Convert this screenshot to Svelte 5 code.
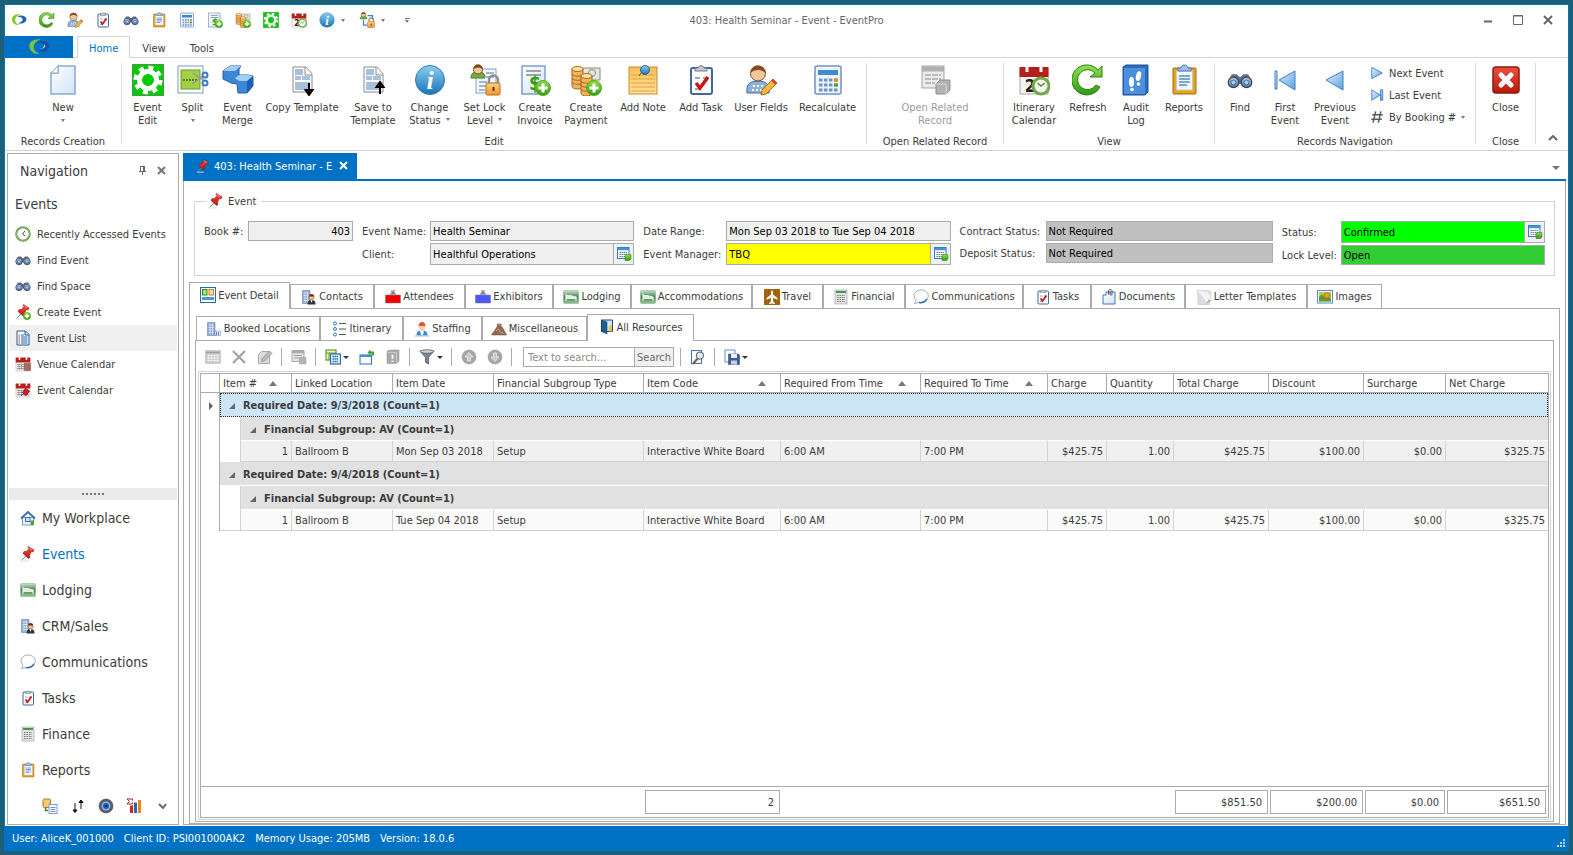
<script>
	const book = '<rect x="6" y="4" width="21" height="26" rx="2" fill="#fff" stroke="#4a6fa5" stroke-width="2"/>';
	const bino =
		'<path d="M3 14l3-5h6l3 3h2l3-3h6l3 5v7H3z" fill="#5b6f8c"/><circle cx="8" cy="19" r="6.5" fill="url(#steel)" stroke="#33455f" stroke-width="1.5"/><circle cx="24" cy="19" r="6.5" fill="url(#steel)" stroke="#33455f" stroke-width="1.5"/><circle cx="8" cy="19" r="3" fill="#a9c9f5" stroke="#2f5ea8"/><circle cx="24" cy="19" r="3" fill="#a9c9f5" stroke="#2f5ea8"/>';
	const plus =
		'<circle cx="24" cy="24" r="7.5" fill="url(#green)" stroke="#5aa81e"/><path d="M24 19.500v9M19.500 24h9" stroke="#fff" stroke-width="3"/>';
	const lock =
		'<path d="M20 20v-4a4.500 4.500 0 0 1 9 0v4" fill="none" stroke="#8f8f8f" stroke-width="2.500"/><rect x="17" y="19" width="14" height="12" rx="1.500" fill="url(#orange)" stroke="#b86d10"/><path d="M24.500 23v4" stroke="#5c3300" stroke-width="2"/>';
	const person =
		'<path d="M2 14c0-5 3-6 7-6s7 1 7 6z" fill="#6fae3f" stroke="#4a7c25"/><circle cx="9" cy="5.500" r="4.500" fill="#f1c89b" stroke="#7a4a20"/><path d="M4.500 5c0-6 9-6 9 0-3-2-6-2-9 0z" fill="#7a4a20"/>';
	const pin =
		'<path d="M3 29l9-9" stroke="#888" stroke-width="2"/><path d="M2 30h16" stroke="#ddd" stroke-width="2"/><path d="M17 1l11 7-2 4-3-1-4 7 1 5-3 2L6 15l2-4 5 0 5-6-2-2z" fill="url(#red)" stroke="#8f0b0b"/><path d="M19 4l5 4" stroke="#ff9d9d" stroke-width="2"/>';
	const calendar =
		'<rect x="2" y="5" width="28" height="25" fill="#f4f4f4" stroke="#a8a8a8"/><rect x="1.500" y="3" width="29" height="10" fill="#b5201c"/><path d="M9 1v7M23 1v7" stroke="#fff" stroke-width="3"/>';
	const calGrid = '<path d="M4 17h24M4 21h24M4 25h24M8 15v13M13 15v13M18 15v13M23 15v13" stroke="#8a8a8a" stroke-width="1.500"/>';
	const clock =
		'<circle cx="23" cy="22" r="8" fill="#f4faec" stroke="#6ea848" stroke-width="3"/><path d="M19.500 19l3.500 3 3.500-3" fill="none" stroke="#4d8a2a" stroke-width="1.500"/>';
	const clipTop = '<path d="M10 7V4h3c0-3 6-3 6 0h3v3z" fill="#c3cad3" stroke="#6f7885"/>';
	const building =
		'<path d="M3 3h15v26H3z" fill="#8ba6d1" stroke="#5a76a5"/><path d="M5 8h11M5 13h11M5 18h11M5 23h11M8 5v23M13 5v23" stroke="#dfe8f7" stroke-width="1.500"/>';
	const bed =
		'<rect x="1" y="3" width="30" height="26" rx="2" fill="url(#bed)" stroke="#7da783"/><path d="M6 9v15M26 15v9" stroke="#fff" stroke-width="2"/><path d="M7 19h19v-3l-11-3H7z" fill="#dfeedd" stroke="#fff" stroke-width="1.500"/>';
	const template =
		'<path d="M7 3h13l6 7v18H7z" fill="#fff" stroke="#8a8a8a"/><path d="M19 3v8h7" fill="#fff" stroke="#8a8a8a"/><path d="M9 5h8v6H9zM9 12h6v4H9zM16 12h8v4h-8zM9 18h15v8H9z" fill="#a9bfe0"/>';
	const gridBox =
		'<rect x="3" y="3" width="23" height="22" fill="#fff" stroke="#2f7cc4" stroke-width="2"/><path d="M3 6h23" stroke="#3f96e0" stroke-width="5"/><path d="M7 13h16M7 17h16M7 21h12" stroke="#6d7d8e" stroke-width="2" stroke-dasharray="3 1"/><path d="M18 19l3-2h9v9l-3 3h-9z" fill="url(#green)" stroke="#267a12"/>';
	const page = '<path d="M11 2h17v28H4V9h7z" fill="url(#sheet)" stroke="#87a9d2" stroke-width="1.500"/><path d="M4 9l7-7v7z" fill="#fff" stroke="#87a9d2"/>';
	const badge = (c) =>
		`<path d="M1 12h30v16H1z" fill="${c}" stroke="#777" stroke-width="1"/><path d="M11 12h10V8h-2V3h-6v5h-2z" fill="#b2b2b2" stroke="#888"/><circle cx="16" cy="8" r="2" fill="#666"/>`;
	const coins =
		'<path d="M2 5v17c0 4 11 4 11 0V5z" fill="#f0b55a" stroke="#a8641b"/><ellipse cx="7.500" cy="5" rx="5.500" ry="2.500" fill="#ffe0a0" stroke="#a8641b"/><path d="M2 10c0 3 11 3 11 0M2 14c0 3 11 3 11 0M2 18c0 3 11 3 11 0" fill="none" stroke="#a8641b"/>';
	const gear = '<circle cx="16" cy="16" r="8.500" fill="none" stroke="#fff" stroke-width="5"/><circle cx="16" cy="16" r="12.500" fill="none" stroke="#fff" stroke-width="4" stroke-dasharray="5 4.820"/>';
	const disabledCalc =
		'<rect x="1" y="3" width="30" height="26" fill="#c9c9c9" stroke="#b5b5b5"/><path d="M2 7h28" stroke="#a0a0a0" stroke-width="3"/><path d="M5 13h22M5 18h22M5 23h22" stroke="#fff" stroke-width="3" stroke-dasharray="4 2"/>';
	const swirl = (left, right) =>
		`<path d="M19 5C8 3 1 9 2 16c1 7 8 11 15 10C10 23 7 19 9 13c1-4 5-7 10-8z" fill="${left}"/><path d="M12 10c6-5 18-3 19 4 0 7-9 11-17 8 6-1 10-4 9-8-1-3-6-5-11-4z" fill="${right}"/>`;

	const icons = {
		logo: swirl('#86c52c', '#1c62b4'),
		appLogo: swirl('#7cc043', '#1b50a0') + '<path d="M15 19c5 0 9-2 8-7 4 2 3 7-8 7z" fill="#9fc6ee"/>',
		refresh: '<path d="M24 21a10 10 0 1 1-1-12l-5 4h12V2l-4 4A15 15 0 1 0 28 23z" fill="url(#green)" stroke="#2a7f10"/>',
		user: '<path d="M2 29c-1-9 3-12 11-12s12 3 11 12z" fill="#8fb0da" stroke="#446a9c"/><path d="M8 22h11M7 26h13" stroke="#fff" stroke-width="2" stroke-dasharray="2 2"/><circle cx="13" cy="9.500" r="7.500" fill="#f4c79b" stroke="#7a4a20"/><path d="M5.500 9c0-10 15-10 15 0-4-4-11-4-15 0z" fill="#8a4b1e"/><path d="M16 31l1-5 11-11 4 4-11 11z" fill="#f5b942" stroke="#a8661a"/><path d="M27 16l4 4" stroke="#d33" stroke-width="2"/>',
		task: book.replace('#4a6fa5', '#3f67a0') + clipTop + '<path d="M10 14h5M18 14h5M10 25h5" stroke="#9aa9bb" stroke-width="2"/><path d="M11 19l4 5 8-11" fill="none" stroke="#c4161c" stroke-width="3.500"/>',
		find: bino,
		report: '<rect x="5" y="4" width="23" height="26" rx="1" fill="#e6a31c" stroke="#a06a10"/><rect x="8.500" y="7" width="16" height="19" fill="#f4f9ff" stroke="#c2cad6"/><path d="M11 12h11M11 15h11M11 18h11M11 21h8" stroke="#5a88c4" stroke-width="1.500"/><path d="M10 7V4h3c0-4 7-4 7 0h3v3z" fill="#9cc0e8" stroke="#4a78ae"/>',
		calc: '<rect x="3" y="2" width="26" height="28" rx="2" fill="#eef4fd" stroke="#6f91c4" stroke-width="1.500"/><path d="M6 8.500h20" stroke="#3f8ad0" stroke-width="5"/><path d="M7 16h19M7 21h19M7 26h19" stroke="#6f91c4" stroke-width="3" stroke-dasharray="3.500 1.500"/><path d="M22 16h4" stroke="#e8861c" stroke-width="3"/><path d="M22 21h4" stroke="#48a820" stroke-width="3"/>',
		invoice: '<rect x="3" y="2" width="23" height="28" fill="url(#sheet)" stroke="#7aa0cc" stroke-width="1.500"/><path d="M7 7h15M7 11h15" stroke="#888" stroke-width="1.500"/><text x="16" y="26" font-size="19" font-weight="bold" fill="#2f9c12" text-anchor="middle">$</text>' + plus,
		payment: '<rect x="12" y="4" width="18" height="12" fill="#e6e6e0" stroke="#8b8b80"/><circle cx="22" cy="9" r="3.500" fill="none" stroke="#8b8b80"/>' + coins + `<g transform="translate(9 7)">${coins}</g>` + plus,
		gear: '<rect x=".5" y=".5" width="31" height="31" fill="#0c0" stroke="#5c8a5c"/>' + gear,
		itinerary: calendar + '<text x="12" y="28" font-size="17" font-weight="bold" fill="#222" text-anchor="middle">2</text>' + clock,
		info: '<circle cx="16" cy="16" r="14.500" fill="url(#blue)" stroke="#2c7cb8"/><text x="16" y="25" font-family="Liberation Serif" font-size="26" font-style="italic" font-weight="bold" fill="#fff" text-anchor="middle">i</text>',
		lockTree: person + '<path d="M17 7h10v8M9 16v10h7" fill="none" stroke="#3f82c8" stroke-width="2.500"/>' + lock,
		lockUser: '<rect x="7" y="5" width="20" height="24" fill="#f4f8fd" stroke="#7fa0cc"/><path d="M17 9h8M17 13h8M10 18h8M10 22h8M10 26h6" stroke="#7fa0cc" stroke-width="1.500"/>' + person + lock,
		page,
		split: '<rect x="1" y="2" width="25" height="27" fill="#fff" stroke="#7a9cc8"/><rect x="4" y="6" width="19" height="19" fill="#a5cf45" stroke="#6c9c1c"/><path d="M6 16h15" stroke="#41610c" stroke-width="1.500" stroke-dasharray="2 1"/><path d="M16 9l10 7M15 20l11-8" stroke="#8f99a6" stroke-width="1.500"/><circle cx="28" cy="11" r="2.500" fill="#fff" stroke="#3b78c4" stroke-width="2"/><circle cx="28" cy="19" r="2.500" fill="#fff" stroke="#3b78c4" stroke-width="2"/>',
		merge: '<path d="M1 7l7-5h11l-2 3v6h9l5 1v10l-6 7h-9l-1-9-6-1-8-4z" fill="#3c87d8" stroke="#1f5fa8"/><path d="M1 7l7-5h11l-6 5zM17 11h9l5 1-5 5h-9l-4-3z" fill="#9fcdf6"/><path d="M25 17l6-5v10l-6 7z" fill="#1e62b4"/>',
		copyTemplate: template + '<path d="M23 19v10M19.500 26l3.500 5 3.500-5z" stroke="#000" stroke-width="2"/>',
		saveTemplate: template + '<path d="M23 30V20M19.500 23l3.500-5 3.500 5z" stroke="#000" stroke-width="2"/>',
		note: '<rect x="2" y="3" width="28" height="27" fill="url(#note)" stroke="#c98b2b"/><path d="M4 11h24M4 15h24M4 19h24M4 23h24M4 27h24" stroke="#e2a13c"/><circle cx="18" cy="6" r="4.500" fill="url(#blue)" stroke="#2a5f96"/><path d="M14 9l-2 3" stroke="#555"/>',
		related: '<rect x="3" y="2" width="22" height="22" fill="#ececec" stroke="#a3a3a3"/><path d="M3 5h22" stroke="#b0b0b0" stroke-width="5"/><path d="M6 11h16M6 15h16M6 19h10" stroke="#a9a9a9" stroke-width="1.500" stroke-dasharray="6 1"/><path d="M17 20l4-4h10v10l-4 4H17z" fill="#b2b2b2" stroke="#8f8f8f"/><path d="M17 20h10v10" fill="none" stroke="#d9d9d9"/>',
		audit: '<path d="M3 3l3-2h22v27l-3 3H3z" fill="#2c6cc0" stroke="#1d4f96"/><rect x="4" y="4" width="21" height="26" fill="#4c8fdc"/><ellipse cx="11.500" cy="18" rx="2.500" ry="5" fill="#fff"/><ellipse cx="18.500" cy="12" rx="2.500" ry="5" fill="#fff" transform="rotate(12 18 12)"/><circle cx="12" cy="25.500" r="1.800" fill="#fff"/><circle cx="18.500" cy="20" r="1.800" fill="#fff"/>',
		first: '<path d="M6 7h2v18H6zM26 7v19L10 16z" fill="url(#sky)" stroke="#3f7cc0"/>',
		prev: '<path d="M24 7v19L7 16z" fill="url(#sky)" stroke="#3f7cc0"/>',
		next: '<path d="M4 3v26l24-13z" fill="url(#sky)" stroke="#3f7cc0" stroke-width="2"/>',
		last: '<path d="M24 4h5v24h-5zM4 4v24l19-12z" fill="url(#sky)" stroke="#3f7cc0" stroke-width="2"/>',
		hash: '<path d="M13 3L7 29M25 3l-6 26M5 11h24M3 21h24" stroke="#55605a" stroke-width="3.500"/>',
		closeRed: '<rect x="3" y="3" width="26" height="26" rx="3" fill="url(#red)" stroke="#8a1a0c" stroke-width="1.500"/><path d="M11 11l10 10M21 11L11 21" stroke="#fff" stroke-width="5" stroke-linecap="round"/>',
		pin,
		pinPlus: pin + plus,
		recent: '<circle cx="16" cy="16" r="13.500" fill="#fff" stroke="#5d9641" stroke-width="4"/><circle cx="16" cy="16" r="13.500" fill="none" stroke="#b6d69c" stroke-width="1"/><path d="M20 10l-5 6 5 4" fill="none" stroke="#444" stroke-width="2"/>',
		list: '<path d="M4 2h17l7 7v21H4z" fill="#fff" stroke="#1c5a96" stroke-width="2"/><path d="M20 2v8h8" fill="#cfe0f2" stroke="#1c5a96" stroke-width="2"/><path d="M12 10h6M12 14h13M12 18h13M12 22h13M12 26h13" stroke="#1f66ac" stroke-width="2"/><path d="M7 10h3M7 14h3M7 18h3M7 22h3M7 26h3" stroke="#c33" stroke-width="2"/>',
		venueCal: calendar + calGrid + '<rect x="19" y="15" width="12" height="14" fill="#a86a5a" stroke="#7c463a"/>',
		eventCal: calendar + calGrid + '<path d="M12 28l7-7M21 13l8 5-7 9-7-6z" fill="#d8202a" stroke="#99101a" stroke-width="2"/>',
		home: '<path d="M5 15h22v15H5z" fill="#eaf2fc" stroke="#4d7cb8" stroke-width="1.500"/><path d="M2 17L16 4l14 13" fill="none" stroke="#3e6fae" stroke-width="4"/><rect x="11" y="15" width="9" height="8" fill="#cfe0f6" stroke="#3e6fae" stroke-width="2"/><rect x="21" y="21" width="7" height="9" fill="#4da52c"/>',
		lodging: bed,
		crm: building + '<path d="M13 31c0-7 3-9 8-9s8 2 8 9z" fill="#333"/><path d="M19 22l2 6 2-6z" fill="#fff"/><circle cx="21" cy="16" r="5.500" fill="#f1c08c" stroke="#7a4a20"/><path d="M16 15c0-6 10-6 10 0z" fill="#5a3416"/>',
		chat: '<path d="M6 23C-3 12 5 2 16 2s20 10 11 20c-4 5-11 6-15 5l-9 2z" fill="#fff" stroke="#8593a3" stroke-width="1.500"/><path d="M28 20c-4 6-10 8-16 7" fill="none" stroke="#3c6fb0" stroke-width="3"/>',
		finance: '<rect x="4" y="2" width="24" height="28" fill="#e4e4e4" stroke="#8b8b8b"/><path d="M6 6h20" stroke="#3f9a4d" stroke-width="4"/><path d="M8 13h16M8 17h16M8 21h16M8 25h16" stroke="#777" stroke-width="2" stroke-dasharray="3 2"/>',
		database: '<rect x="2" y="2" width="15" height="17" rx="3" fill="#f2c877" stroke="#a87424" stroke-width="2"/><rect x="14" y="13" width="16" height="18" fill="#fff" stroke="#7b9fd0" stroke-width="2"/><path d="M17 19h10M17 23h10M17 27h10" stroke="#6b94cc" stroke-width="2"/><path d="M7 20v5h5" fill="none" stroke="#2f9020" stroke-width="3"/>',
		arrows: '<path d="M10 10v18M6 24l4 5 4-5zM22 22V4M18 9l4-5 4 5z" fill="#111" stroke="#111" stroke-width="2"/>',
		lens: '<circle cx="16" cy="16" r="14" fill="#565c66" stroke="#33373d"/><circle cx="16" cy="16" r="9" fill="#8db7ee"/><circle cx="16" cy="16" r="6" fill="#2058ac"/><circle cx="16" cy="16" r="2" fill="#0b1f4a"/>',
		sigma: '<path d="M2 2h11v3M2 2l5 5-5 5h11V9" fill="none" stroke="#b02020" stroke-width="2"/><path d="M8 15h6v15H8z" fill="#cc2a1e"/><path d="M16 9h6v21h-6z" fill="#2f66b4"/><path d="M24 4h6v26h-6z" fill="#f08218"/>',
		detail: '<rect x="1" y="1" width="30" height="30" fill="#f5faff" stroke="#2b6ca8" stroke-width="2"/><rect x="5" y="5" width="9" height="11" fill="#a8dc6c" stroke="#3f8a14" stroke-width="2"/><rect x="18" y="5" width="9" height="11" fill="#f5dca0" stroke="#c58a2a" stroke-width="2"/><path d="M4 23h24" stroke="#4b98cf" stroke-width="6"/>',
		badgeRed: badge('#f40000'),
		badgeBlue: badge('#4b57ff'),
		travel: '<rect width="32" height="32" rx="1" fill="#a8690f"/><path d="M4 0v32M9 0v32M23 0v32M28 0v32" stroke="#7c4a08"/><path d="M16 3c2 0 2 4 2 8l9 7v3l-9-3v7l4 3v2l-6-1-6 1v-2l4-3v-7l-9 3v-3l9-7c0-4 0-8 2-8z" fill="#fff"/>',
		document: '<path d="M10 6h18v24H4V12h6z" fill="url(#sheet)" stroke="#4077b8" stroke-width="2"/><path d="M15 11V4c0-4 7-4 7 0v6c0 3-4 3-4 0V5" fill="none" stroke="#444" stroke-width="1.800"/>',
		letter: '<path d="M3 2l26 2-2 27H4z" fill="#dedee2" stroke="#b6b6bc"/><path d="M3 2l19 3 7 8-5 17" fill="#f4f4f6" stroke="#d2d2d6"/><path d="M19 31l7-10 4 2z" fill="#aaa"/>',
		image: '<rect x="1" y="3" width="30" height="25" fill="#fff" stroke="#5b86c4" stroke-width="2"/><rect x="4" y="6" width="24" height="19" fill="#b8c84c"/><path d="M4 25V15l6-4 6 6 5-3 7 5v6z" fill="#5f9c2a"/><circle cx="20" cy="13" r="5.500" fill="#f0a020" stroke="#a3571a" stroke-width="2" stroke-dasharray="2 1"/>',
		building: building + '<path d="M18 20h11v9H18z" fill="#f7fafd" stroke="#5a76a5"/><path d="M21 22v6M25 22v6" stroke="#4a78be" stroke-width="2"/>',
		steps: '<g fill="#fff" stroke="#2f76b8" stroke-width="2"><circle cx="6" cy="5" r="3"/><circle cx="6" cy="16" r="3"/><circle cx="6" cy="27" r="3"/></g><path d="M14 5h14M14 16h14M14 27h14" stroke="#555" stroke-width="2"/>',
		staff: '<path d="M5 30c0-9 4-11 11-11s11 2 11 11z" fill="#3a87d6"/><path d="M12 19h8l-2 9h-4z" fill="#fff"/><circle cx="16" cy="12" r="6.500" fill="#f6cfa3"/><path d="M9 10c0-11 14-11 14 0z" fill="#e8541f"/><path d="M1 30h30" stroke="#c8d5e2" stroke-width="3"/>',
		misc: '<path d="M1 28l9-13 5-8 8 6 8 15z" fill="#8f6a50" stroke="#5f4330"/><path d="M12 6h9l-2 5h-5z" fill="#b98f70" stroke="#5f4330"/><path d="M10 20l5-4 4 7 6 1" stroke="#c9a78c" stroke-width="2" fill="none"/>',
		door: '<path d="M5 2h22v23H5z" fill="#cde6f9" stroke="#16456e" stroke-width="2"/><path d="M5 2l11 4v24L5 25z" fill="#1c5f98" stroke="#0f3556"/><path d="M20 25V13h6v12z" fill="#f0c040"/>',
		addRow: disabledCalc,
		remove: '<path d="M4 4l24 24M28 4L4 28" stroke="#a3a3a3" stroke-width="4.500"/>',
		edit: '<path d="M9 5h16v24H3V11z" fill="#dcdcdc" stroke="#a8a8a8" stroke-width="2"/><path d="M9 25l1-6L25 4l5 5-15 15z" fill="#bcbcbc" stroke="#8f8f8f" stroke-width="1.500"/>',
		gridOff: '<path d="M2 3h24v22H2z" fill="#e6e6e6" stroke="#a6a6a6" stroke-width="2"/><path d="M2 6h24" stroke="#aaa" stroke-width="5"/><path d="M6 13h16M6 18h16" stroke="#9f9f9f" stroke-width="2"/><path d="M17 17h13v13H17z" fill="#b4b4b4" stroke="#999"/>',
		grids: '<rect x="2" y="2" width="20" height="20" fill="#e4f2c4" stroke="#6b9c28" stroke-width="2.500"/><path d="M2 8h20M8 8v14" stroke="#6b9c28" stroke-width="2"/><rect x="11" y="10" width="20" height="20" fill="#e9f2fd" stroke="#2e6bb0" stroke-width="2.500"/><path d="M15 15h12M15 20h12M15 25h12" stroke="#2e6bb0" stroke-width="3" stroke-dasharray="3 1"/>',
		reset: '<rect x="2" y="12" width="23" height="18" fill="#fff" stroke="#2f6fb4" stroke-width="2"/><path d="M2 14h23" stroke="#3f8fdc" stroke-width="4"/><path d="M17 7l6-6v4h7v8h-4V9h-3v4z" fill="#3fa026"/>',
		bookOff: '<path d="M4 5l4-3h20v22l-5 5H4z" fill="#a9a9a9" stroke="#8c8c8c"/><path d="M5 7h18v21" fill="none" stroke="#ccc" stroke-width="2"/><path d="M15 11v9M15 23v3" stroke="#eee" stroke-width="4"/>',
		funnel: '<path d="M2 4h28L19 17v13l-6-3V17z" fill="#7f8894" stroke="#4b525c" stroke-width="1.500"/><ellipse cx="16" cy="5" rx="13.500" ry="3.500" fill="#cdd4dd" stroke="#4b525c" stroke-width="1.500"/>',
		up: '<circle cx="16" cy="16" r="14" fill="#a6a6a6" stroke="#8f8f8f"/><path d="M16 7l8 9h-5v8h-6v-8H8z" fill="#c8c8c8" stroke="#eee" stroke-width="1.500"/>',
		down: '<circle cx="16" cy="16" r="14" fill="#a6a6a6" stroke="#8f8f8f"/><path d="M16 25l8-9h-5V8h-6v8H8z" fill="#c8c8c8" stroke="#eee" stroke-width="1.500"/>',
		preview: '<rect x="3" y="3" width="20" height="26" fill="#f6faff" stroke="#3f77b8" stroke-width="2"/><path d="M6 30l10-12" stroke="#8a5a28" stroke-width="4"/><circle cx="20" cy="13" r="7" fill="#e4effa" stroke="#6b7480" stroke-width="2.500"/>',
		save: '<path d="M2 2h20v24H2z" fill="#fff" stroke="#5f8dc8" stroke-width="2"/><path d="M9 10h20l2 2v19H9z" fill="#3b5d94" stroke="#263f68"/><path d="M14 10h12v8H14z" fill="#e9eef6"/><path d="M14 23h12v8H14z" fill="#c6d0e0"/>',
		lookup: gridBox
	};

	const quick = ['logo', 'refresh', 'user', 'task', 'find', 'report', 'calc', 'invoice', 'payment', 'gear', 'itinerary', 'info', 'lockTree'];

	const ribbon = [
		{ caption: 'Records Creation', buttons: [{ icon: 'page', lines: ['New'], w: 60, menu: true }], w: 117 },
		{
			caption: 'Edit',
			w: 745,
			buttons: [
				{ icon: 'gear', lines: ['Event', 'Edit'], w: 45 },
				{ icon: 'split', lines: ['Split'], w: 45, menu: true },
				{ icon: 'merge', lines: ['Event', 'Merge'], w: 45 },
				{ icon: 'copyTemplate', lines: ['Copy Template'], w: 84 },
				{ icon: 'saveTemplate', lines: ['Save to', 'Template'], w: 58 },
				{ icon: 'info', lines: ['Change', 'Status'], w: 55, menu: true },
				{ icon: 'lockUser', lines: ['Set Lock', 'Level'], w: 55, menu: true },
				{ icon: 'invoice', lines: ['Create', 'Invoice'], w: 46 },
				{ icon: 'payment', lines: ['Create', 'Payment'], w: 56 },
				{ icon: 'note', lines: ['Add Note'], w: 58 },
				{ icon: 'task', lines: ['Add Task'], w: 58 },
				{ icon: 'user', lines: ['User Fields'], w: 62 },
				{ icon: 'calc', lines: ['Recalculate'], w: 71 }
			]
		},
		{ caption: 'Open Related Record', w: 137, buttons: [{ icon: 'related', lines: ['Open Related', 'Record'], w: 90, disabled: true }] },
		{
			caption: 'View',
			w: 211,
			buttons: [
				{ icon: 'itinerary', lines: ['Itinerary', 'Calendar'], w: 54 },
				{ icon: 'refresh', lines: ['Refresh'], w: 54 },
				{ icon: 'audit', lines: ['Audit', 'Log'], w: 42 },
				{ icon: 'report', lines: ['Reports'], w: 54 }
			]
		},
		{
			caption: 'Records Navigation',
			w: 261,
			buttons: [
				{ icon: 'find', lines: ['Find'], w: 44, small: true },
				{ icon: 'first', lines: ['First', 'Event'], w: 46 },
				{ icon: 'prev', lines: ['Previous', 'Event'], w: 54 }
			],
			list: [
				{ icon: 'next', text: 'Next Event' },
				{ icon: 'last', text: 'Last Event' },
				{ icon: 'hash', text: 'By Booking #', menu: true }
			]
		},
		{ caption: 'Close', w: 60, buttons: [{ icon: 'closeRed', lines: ['Close'], w: 50 }] }
	];

	const links = [
		['recent', 'Recently Accessed Events'],
		['find', 'Find Event'],
		['find', 'Find Space'],
		['pinPlus', 'Create Event'],
		['list', 'Event List'],
		['venueCal', 'Venue Calendar'],
		['eventCal', 'Event Calendar']
	];

	const modules = [
		['home', 'My Workplace'],
		['pin', 'Events'],
		['lodging', 'Lodging'],
		['crm', 'CRM/Sales'],
		['chat', 'Communications'],
		['task', 'Tasks'],
		['finance', 'Finance'],
		['report', 'Reports']
	];

	const tabs = [
		{ icon: 'detail', text: 'Event Detail', w: 101 },
		{ icon: 'crm', text: 'Contacts', w: 84 },
		{ icon: 'badgeRed', text: 'Attendees', w: 91 },
		{ icon: 'badgeBlue', text: 'Exhibitors', w: 88 },
		{ icon: 'lodging', text: 'Lodging', w: 78 },
		{ icon: 'lodging', text: 'Accommodations', w: 121 },
		{ icon: 'travel', text: 'Travel', w: 71 },
		{ icon: 'finance', text: 'Financial', w: 82 },
		{ icon: 'chat', text: 'Communications', w: 118 },
		{ icon: 'task', text: 'Tasks', w: 68 },
		{ icon: 'document', text: 'Documents', w: 94 },
		{ icon: 'letter', text: 'Letter Templates', w: 122 },
		{ icon: 'image', text: 'Images', w: 75 }
	];

	const subTabs = [
		{ icon: 'building', text: 'Booked Locations', w: 124 },
		{ icon: 'steps', text: 'Itinerary', w: 83 },
		{ icon: 'staff', text: 'Staffing', w: 79 },
		{ icon: 'misc', text: 'Miscellaneous', w: 105 },
		{ icon: 'door', text: 'All Resources', w: 107 }
	];

	const columns = [
		{ text: 'Item #', w: 71, sort: true, right: true },
		{ text: 'Linked Location', w: 101 },
		{ text: 'Item Date', w: 101 },
		{ text: 'Financial Subgroup Type', w: 150 },
		{ text: 'Item Code', w: 137, sort: true, total: '2' },
		{ text: 'Required From Time', w: 140, sort: true },
		{ text: 'Required To Time', w: 127, sort: true },
		{ text: 'Charge', w: 59, right: true },
		{ text: 'Quantity', w: 67, right: true },
		{ text: 'Total Charge', w: 95, right: true, total: '$851.50' },
		{ text: 'Discount', w: 95, right: true, total: '$200.00' },
		{ text: 'Surcharge', w: 82, right: true, total: '$0.00' },
		{ text: 'Net Charge', right: true, total: '$651.50' }
	];

	const groups = [
		{ date: '9/3/2018', day: 'Mon Sep 03 2018' },
		{ date: '9/4/2018', day: 'Tue Sep 04 2018' }
	].map((g) => ({
		...g,
		cells: ['1', 'Ballroom B', g.day, 'Setup', 'Interactive White Board', '6:00 AM', '7:00 PM', '$425.75', '1.00', '$425.75', '$100.00', '$0.00', '$325.75']
	}));

	const totalsTemplate = columns.map((c) => (c.w ? c.w + 'px' : '1fr')).join(' ');

	let tab = $state('Event Detail');
	let subTab = $state('All Resources');
	let link = $state('Event List');
	let module = $state('Events');
	let search = $state('');
</script>

{#snippet icon(name, size = 16)}
	<svg class="icon" width={size} height={size} viewBox="0 0 32 32" fill="none" aria-hidden="true">{@html icons[name]}</svg>
{/snippet}

{#snippet tool(name, menu = false)}
	<button class="tool" aria-label={name}>
		{@render icon(name)}
		{#if menu}<span class="caret dark"></span>{/if}
	</button>
{/snippet}

{#snippet field(id, label, value, kind = '', lookup = false)}
	<label for={id}>{label}</label>
	<div class="field {kind}" class:lookup>
		<input {id} type="text" {value} readonly />
		{#if lookup}<button aria-label="Look up {label}">{@render icon('lookup')}</button>{/if}
	</div>
{/snippet}

{#snippet tabRow(items, current, pick)}
	<div class="tabs" role="tablist">
		{#each items as t}
			<button role="tab" aria-selected={t.text === current} class:active={t.text === current} style="width: {t.w}px" onclick={() => pick(t.text)}>
				{@render icon(t.icon)}{t.text}
			</button>
		{/each}
	</div>
{/snippet}

<svg class="defs" width="0" height="0" aria-hidden="true">
	<defs>
		<linearGradient id="green" x2="0" y2="1"><stop stop-color="#8fe04a" /><stop offset="1" stop-color="#2f9a14" /></linearGradient>
		<linearGradient id="blue" x2="0" y2="1"><stop stop-color="#8ccdf0" /><stop offset="1" stop-color="#1a74b8" /></linearGradient>
		<linearGradient id="sky" x2="1" y2="1"><stop stop-color="#e6f4ff" /><stop offset="1" stop-color="#5aa0e4" /></linearGradient>
		<linearGradient id="sheet" x2="1" y2="1"><stop stop-color="#fff" /><stop offset="1" stop-color="#cfe3f8" /></linearGradient>
		<linearGradient id="red" x2="0" y2="1"><stop stop-color="#ee5040" /><stop offset="1" stop-color="#b8180c" /></linearGradient>
		<linearGradient id="orange" x2="0" y2="1"><stop stop-color="#ffd28a" /><stop offset="1" stop-color="#f0942a" /></linearGradient>
		<linearGradient id="note" x2="0" y2="1"><stop stop-color="#f7bf55" /><stop offset="1" stop-color="#ffe3a0" /></linearGradient>
		<linearGradient id="steel" x2="0" y2="1"><stop stop-color="#c3d0e2" /><stop offset="1" stop-color="#4f6890" /></linearGradient>
		<linearGradient id="bed" x2="0" y2="1"><stop stop-color="#cfe2cf" /><stop offset=".5" stop-color="#3b8148" /><stop offset="1" stop-color="#9cc69c" /></linearGradient>
	</defs>
</svg>

<div class="desktop">
	<div class="window">
		<header>
			<div class="quick">
				{#each quick as name}
					<button aria-label={name}>{@render icon(name)}</button>
					{#if name === 'info' || name === 'lockTree'}<span class="caret"></span>{/if}
				{/each}
				<button class="customize" aria-label="Customize toolbar"><i></i><span class="caret"></span></button>
			</div>
			<h1>403: Health Seminar - Event - EventPro</h1>
			<div class="controls">
				<button aria-label="Minimize"><svg width="12" height="12"><path d="M2 7.500h8" stroke="#666" stroke-width="2" /></svg></button>
				<button aria-label="Maximize"><svg width="12" height="12"><path d="M1.500 1.500h9v9h-9z M1 2h10" fill="none" stroke="#666" /></svg></button>
				<button aria-label="Close window"><svg width="12" height="12"><path d="M2 2l8 8M10 2l-8 8" stroke="#666" stroke-width="2" /></svg></button>
			</div>
		</header>

		<nav class="menu">
			<button class="app" aria-label="Application menu">{@render icon('appLogo', 22)}</button>
			<a href="#home" class="active">Home</a>
			<a href="#view">View</a>
			<a href="#tools">Tools</a>
		</nav>

		<div class="ribbon">
			{#each ribbon as group}
				<section style="width: {group.w}px">
					<div class="buttons">
						{#each group.buttons as b}
							<button class="big" style="width: {b.w}px" disabled={b.disabled}>
								<span class="pic">{@render icon(b.icon, b.small ? 26 : 32)}</span>
								{#each b.lines as line, i}
									<span>{line}{#if b.menu && i === 1}<span class="caret inline"></span>{/if}</span>
								{/each}
								{#if b.menu && b.lines.length === 1}<span class="caret below"></span>{/if}
							</button>
						{/each}
						{#if group.list}
							<div class="list">
								{#each group.list as l}
									<button>{@render icon(l.icon, 14)}{l.text}{#if l.menu}<span class="caret"></span>{/if}</button>
								{/each}
							</div>
						{/if}
					</div>
					<h2>{group.caption}</h2>
				</section>
			{/each}
			<button class="collapse" aria-label="Collapse ribbon">
				<svg width="10" height="6"><path d="M1 5l4-4 4 4" fill="none" stroke="#666" stroke-width="2" /></svg>
			</button>
		</div>

		<div class="body">
			<aside>
				<div class="title">
					<h2>Navigation</h2>
					<button aria-label="Pin panel"><svg width="7" height="9"><path d="M1.500 0v5M2 .5h3M4.500 0v5M5.500 0v5M0 5.500h7M3.500 6v3" fill="none" stroke="#666" /></svg></button>
					<button aria-label="Close panel"><svg width="9" height="9"><path d="M1 1l7 7M8 1L1 8" stroke="#777" stroke-width="2" /></svg></button>
				</div>
				<h3>Events</h3>
				<ul class="links">
					{#each links as [name, text]}
						<li><a href="#{text}" class:active={text === link} onclick={() => (link = text)}>{@render icon(name)}{text}</a></li>
					{/each}
				</ul>
				<div class="splitter">{#each Array(6) as _}<i></i>{/each}</div>
				<ul class="modules">
					{#each modules as [name, text]}
						<li><a href="#{text}" class:active={text === module} onclick={() => (module = text)}>{@render icon(name)}{text}</a></li>
					{/each}
				</ul>
				<div class="extra">
					{#each ['database', 'arrows', 'lens', 'sigma'] as name}
						<button aria-label={name}>{@render icon(name)}</button>
					{/each}
					<button aria-label="More"><svg width="9" height="7"><path d="M1 1l4 4 3-4" fill="none" stroke="#666" stroke-width="2" /></svg></button>
				</div>
			</aside>

			<main>
				<div class="docs">
					<div class="doc">
						{@render icon('pin', 14)}<span>403: Health Seminar - E</span>
						<button aria-label="Close tab"><svg width="9" height="9"><path d="M1 1l7 7M8 1L1 8" stroke="#fff" stroke-width="2" /></svg></button>
					</div>
					<button class="more" aria-label="Open documents"><span class="caret large"></span></button>
				</div>

				<div class="content">
					<fieldset>
						<legend>{@render icon('pin')}Event</legend>
						<div class="fields">
							<div class="pair a">{@render field('book', 'Book #:', '403', 'number')}</div>
							<div class="pair b">
								{@render field('name', 'Event Name:', 'Health Seminar')}
								{@render field('client', 'Client:', 'Healthful Operations', '', true)}
							</div>
							<div class="pair c">
								{@render field('range', 'Date Range:', 'Mon Sep 03 2018 to Tue Sep 04 2018')}
								{@render field('manager', 'Event Manager:', 'TBQ', 'yellow', true)}
							</div>
							<div class="pair d">
								{@render field('contract', 'Contract Status:', 'Not Required', 'gray')}
								{@render field('deposit', 'Deposit Status:', 'Not Required', 'gray')}
							</div>
							<div class="pair e">
								{@render field('status', 'Status:', 'Confirmed', 'lime', true)}
								{@render field('lock', 'Lock Level:', 'Open', 'green')}
							</div>
						</div>
					</fieldset>

					{@render tabRow(tabs, tab, (t) => (tab = t))}
					<div class="page">
						{@render tabRow(subTabs, subTab, (t) => (subTab = t))}
						<div class="page inner">
							<div class="toolbar">
								{@render tool('addRow')}
								{@render tool('remove')}
								{@render tool('edit')}
								<hr />
								{@render tool('gridOff')}
								<hr />
								{@render tool('grids', true)}
								{@render tool('reset')}
								{@render tool('bookOff')}
								<hr />
								{@render tool('funnel', true)}
								<hr />
								{@render tool('up')}
								{@render tool('down')}
								<hr />
								<form class="search" onsubmit={(ev) => ev.preventDefault()}>
									<input type="text" placeholder="Text to search..." aria-label="Text to search" bind:value={search} />
									<button type="submit">Search</button>
								</form>
								<hr />
								{@render tool('preview')}
								<hr />
								{@render tool('save', true)}
							</div>

							<div class="frame">
								<div class="grid">
									<div class="scroll">
										<table>
											<colgroup>
												<col style="width: 19px" />
												<col style="width: 21px" />
												<col style="width: 51px" />
												{#each columns.slice(1) as c}
													<col style={c.w ? `width: ${c.w}px` : ''} />
												{/each}
											</colgroup>
											<thead>
												<tr>
													<th></th>
													{#each columns as c, i}
														<th colspan={i === 0 ? 2 : 1}>
															<div>{c.text}{#if c.sort}<span class="sort"></span>{/if}</div>
														</th>
													{/each}
												</tr>
											</thead>
											<tbody>
												{#each groups as g, i}
													<tr class="group" class:selected={i === 0}>
														<td class="mark">{#if i === 0}<span class="current"></span>{/if}</td>
														<td colspan="14"><span class="open"></span>Required Date: {g.date} (Count=1)</td>
													</tr>
													<tr class="group">
														<td class="mark"></td>
														<td class="indent"></td>
														<td colspan="13"><span class="open"></span>Financial Subgroup: AV (Count=1)</td>
													</tr>
													<tr class="data">
														<td class="mark"></td>
														<td class="indent"></td>
														{#each g.cells as cell, n}
															<td class:right={columns[n].right}>{cell}</td>
														{/each}
													</tr>
												{/each}
											</tbody>
										</table>
									</div>
									<div class="totals" style="grid-template-columns: 19px {totalsTemplate}">
										<div></div>
										{#each columns as c}
											<div>{#if c.total}<output>{c.total}</output>{/if}</div>
										{/each}
									</div>
								</div>
							</div>
						</div>
					</div>
				</div>
			</main>
		</div>

		<footer>
			<span>User: AliceK_001000</span>
			<span>Client ID: PSI001000AK2</span>
			<span>Memory Usage: 205MB</span>
			<span>Version: 18.0.6</span>
			<svg width="9" height="9"><path d="M6 0h2v2H6zM3 3h2v2H3zM6 3h2v2H6zM0 6h2v2H0zM3 6h2v2H3zM6 6h2v2H6z" fill="#b5d2ea" /></svg>
		</footer>
	</div>
</div>

<style>
	:global(body) {
		margin: 0;
	}

	.desktop,
	.desktop * {
		box-sizing: border-box;
	}
	.desktop {
		height: 100vh;
		padding: 4px;
		background: #1b5f78;
		color: #3b3b3b;
		font-family: Tahoma, 'DejaVu Sans Condensed', 'Noto Sans', sans-serif;
		font-size: 11px;
		line-height: 13px;
	}
	.defs {
		position: absolute;
	}
	.icon {
		flex: none;
		display: block;
	}
	button {
		padding: 0;
		border: 0;
		background: none;
		color: inherit;
		font: inherit;
		white-space: nowrap;
	}
	a {
		color: inherit;
		text-decoration: none;
	}
	h1,
	h2,
	h3,
	ul {
		margin: 0;
		padding: 0;
		font-size: 11px;
		font-weight: normal;
		list-style: none;
	}

	.caret {
		flex: none;
		display: inline-block;
		border: 2px solid transparent;
		border-top: 3px solid #777;
		border-bottom: 0;
	}
	.caret.dark {
		border-width: 3px 3px 0;
		border-top-color: #333;
	}
	.caret.large {
		border-width: 4px 4px 0;
	}
	.caret.inline {
		margin-left: 5px;
		vertical-align: 3px;
	}
	.caret.below {
		margin-top: 5px;
	}

	.window {
		display: flex;
		flex-direction: column;
		height: 100%;
		border: 1px solid #0072c6;
		background: #fff;
	}

	header {
		display: grid;
		grid-template-columns: 1fr auto 1fr;
		align-items: center;
		height: 31px;
		padding-bottom: 1px;
	}
	header h1 {
		color: #666;
	}
	.quick {
		display: flex;
		align-items: center;
		padding-left: 6px;
	}
	.quick button {
		width: 16px;
		margin-right: 12px;
	}
	.quick .caret {
		width: 4px;
		margin: 0 14px 0 -6px;
	}
	.quick .customize {
		display: flex;
		flex-direction: column;
		align-items: center;
		gap: 1px;
	}
	.quick .customize .caret {
		margin: 0;
	}
	.customize i {
		width: 5px;
		height: 1px;
		background: #777;
	}
	.controls {
		display: flex;
		justify-content: flex-end;
		gap: 18px;
		padding-right: 14px;
	}
	.controls svg {
		display: block;
	}

	.menu {
		display: flex;
		height: 22px;
		border-bottom: 1px solid #d2d2d2;
	}
	.menu .app {
		display: flex;
		justify-content: center;
		align-items: center;
		width: 68px;
		height: 22px;
		margin-right: 4px;
		background: #0072c6;
	}
	.menu a {
		height: 22px;
		padding: 5px 11px;
		border: 1px solid transparent;
		border-bottom: 0;
	}
	.menu a.active {
		border-color: #d2d2d2;
		background: #fff;
		color: #0072c6;
	}

	.ribbon {
		display: flex;
		flex: none;
		height: 93px;
		border-bottom: 1px solid #d2d2d2;
	}
	.ribbon section {
		display: flex;
		flex-direction: column;
		justify-content: space-between;
		align-items: center;
		margin: 5px 0 6px;
		border-right: 1px solid #dcdcdc;
	}
	.ribbon h2 {
		line-height: 13px;
		margin-bottom: -4px;
	}
	.buttons {
		display: flex;
	}
	.big {
		display: flex;
		flex-direction: column;
		align-items: center;
	}
	.pic {
		display: flex;
		justify-content: center;
		align-items: center;
		height: 38px;
		padding-bottom: 4px;
	}
	.big:disabled {
		color: #9c9c9c;
	}
	.list {
		width: 110px;
		margin-top: -1px;
		padding-left: 8px;
	}
	.list button {
		display: flex;
		align-items: center;
		gap: 5px;
		height: 22px;
	}
	.collapse {
		align-self: flex-end;
		margin: 0 10px 6px auto;
	}

	.body {
		display: flex;
		flex: 1;
		min-height: 0;
		gap: 4px;
		padding: 2px 2px 1px;
	}

	aside {
		display: flex;
		flex-direction: column;
		flex: none;
		width: 172px;
		padding: 0 1px;
		border: 1px solid #ababab;
	}
	aside h2,
	aside h3,
	.modules {
		font-size: 14px;
		line-height: 18px;
	}
	.title {
		display: flex;
		align-items: center;
		height: 35px;
		padding: 0 11px 2px;
	}
	.title h2 {
		flex: 1;
	}
	.title svg {
		display: block;
		margin-left: 11px;
	}
	aside h3 {
		padding: 6px 6px 8px;
	}
	.links {
		flex: 1;
	}
	.links a,
	.modules a {
		display: flex;
		align-items: center;
	}
	.links a {
		gap: 6px;
		height: 26px;
		padding-left: 6px;
	}
	.links a.active {
		background: #f0f0f0;
	}
	.splitter {
		display: flex;
		justify-content: center;
		align-items: center;
		gap: 2px;
		height: 12px;
		background: #ebebeb;
	}
	.splitter i {
		width: 2px;
		height: 2px;
		background: #777;
	}
	.modules a {
		gap: 6px;
		height: 36px;
		padding-left: 11px;
	}
	.modules a.active {
		color: #0072c6;
	}
	.extra {
		display: flex;
		align-items: center;
		gap: 12px;
		height: 36px;
		padding-left: 33px;
	}
	.extra button:last-child {
		margin-left: 4px;
	}

	main {
		display: flex;
		flex-direction: column;
		flex: 1;
		min-width: 0;
	}
	.docs {
		display: flex;
		justify-content: space-between;
		align-items: center;
		height: 28px;
		border-bottom: 2px solid #0072c6;
	}
	.doc {
		display: flex;
		align-items: center;
		width: 174px;
		height: 26px;
		padding: 0 9px 0 13px;
		background: #0072c6;
		color: #fff;
	}
	.doc span {
		flex: 1;
		margin-left: 4px;
		white-space: nowrap;
	}
	.more {
		margin-right: 6px;
	}
	.content {
		display: flex;
		flex-direction: column;
		flex: 1;
		min-height: 0;
		padding: 12px 5px 0;
		border: 1px solid #ababab;
		border-top: 0;
	}

	fieldset {
		min-width: 0;
		margin: 0 5px 6px;
		padding: 12px 9px 10px;
		border: 1px solid #d2d2d2;
	}
	legend {
		display: flex;
		align-items: center;
		gap: 4px;
		margin-left: 3px;
		padding: 0 5px 0 1px;
	}
	.fields {
		display: flex;
		gap: 9px;
	}
	.pair {
		display: grid;
		align-content: start;
		align-items: center;
		gap: 2px 0;
		min-width: 0;
	}
	.a {
		flex: 149 1 0;
		grid-template-columns: 44px minmax(0, 1fr);
	}
	.b {
		flex: 272 1 0;
		grid-template-columns: 68px minmax(0, 1fr);
	}
	.c {
		flex: 307 1 0;
		grid-template-columns: 83px minmax(0, 1fr);
	}
	.d {
		flex: 313 1 0;
		grid-template-columns: 86px minmax(0, 1fr);
	}
	.e {
		flex: 263 1 0;
		grid-template-columns: 59px minmax(0, 1fr);
	}
	.pair label {
		white-space: nowrap;
	}
	.field {
		display: flex;
		height: 20px;
		border: 1px solid #ababab;
		background: #f0f0f0;
	}
	.field.lookup {
		height: 22px;
	}
	.field input {
		flex: 1;
		min-width: 0;
		padding: 0 2px;
		border: 0;
		background: none;
		color: #000;
		font: inherit;
	}
	.field button {
		width: 20px;
		padding-left: 2px;
		border-left: 1px solid #ababab;
		background: #f0f0f0;
	}
	.number input {
		text-align: right;
	}
	.yellow {
		background: #ff0;
	}
	.gray {
		background: #c0c0c0;
	}
	.lime {
		background: #0f0;
	}
	.green {
		background: #32cd32;
	}

	.tabs {
		display: flex;
		align-items: flex-end;
		position: relative;
		height: 27px;
		margin-bottom: -1px;
	}
	.page .tabs {
		padding-left: 1px;
	}
	.tabs button {
		display: flex;
		justify-content: center;
		align-items: center;
		gap: 2px;
		height: 25px;
		border: 1px solid #ababab;
		background: #fff;
	}
	.tabs button.active {
		height: 27px;
		padding-bottom: 2px;
		border-bottom: 0;
	}
	.page {
		display: flex;
		flex-direction: column;
		flex: 1;
		min-height: 0;
		padding: 5px 5px 1px;
		border: 1px solid #ababab;
	}
	.page.inner {
		padding: 0 2px 1px;
	}

	.toolbar {
		display: flex;
		align-items: center;
		height: 30px;
		padding: 2px 0 0 7px;
	}
	.tool {
		display: flex;
		align-items: center;
		gap: 2px;
		margin-right: 10px;
	}
	.toolbar hr {
		width: 1px;
		height: 18px;
		margin: 0 9px 0 -2px;
		border: 0;
		background: #ababab;
	}
	.search {
		display: flex;
		height: 20px;
		margin: 0 8px 0 2px;
	}
	.search input {
		width: 112px;
		padding: 0 4px;
		border: 1px solid #ababab;
		font: inherit;
	}
	.search input::placeholder {
		color: #8a8a8a;
	}
	.search button {
		width: 39px;
		border: 1px solid #ababab;
		border-left: 0;
		background: #f0f0f0;
		color: #6a6a6a;
	}

	.frame {
		display: flex;
		flex: 1;
		min-height: 0;
		padding: 1px;
		border: 1px solid #d2d2d2;
	}
	.grid {
		display: flex;
		flex-direction: column;
		flex: 1;
		min-width: 0;
		border: 1px solid #ababab;
	}
	.scroll {
		flex: 1;
		overflow: hidden;
	}
	table {
		width: 100%;
		border-spacing: 0;
		table-layout: fixed;
	}
	th,
	td {
		padding: 0 3px;
		text-align: left;
		white-space: nowrap;
	}
	th {
		height: 19px;
		border-right: 1px solid #ababab;
		border-bottom: 1px solid #ababab;
		font-weight: normal;
	}
	th:last-child {
		border-right: 0;
	}
	th div {
		display: flex;
		justify-content: space-between;
		align-items: center;
	}
	.sort {
		margin-right: 11px;
		border: 4px solid transparent;
		border-top: 0;
		border-bottom: 5px solid #777;
	}
	.group td {
		height: 24px;
		padding-top: 1px;
		border-bottom: 1px solid #fff;
		background: #e1e1e1;
		font-weight: bold;
	}
	.group td:last-child {
		padding-left: 9px;
	}
	.group.selected td:last-child {
		padding: 0 3px 0 8px;
		border: 1px dotted #333;
		background: #cde6f7;
	}
	.open {
		display: inline-block;
		margin-right: 8px;
		border-left: 6px solid transparent;
		border-bottom: 6px solid #666;
	}
	.data td {
		height: 21px;
		border-right: 1px solid #d2d2d2;
		border-bottom: 1px solid #d2d2d2;
		background: #f0f0f0;
	}
	.data:last-child td {
		background: #fafafa;
	}
	.data td:last-child {
		border-right: 0;
	}
	.data td.right {
		text-align: right;
	}
	td.mark,
	tr td.indent,
	.data:last-child td.mark,
	.data:last-child td.indent {
		border-right: 1px solid #ababab;
		border-bottom: 0;
		background: #fff;
	}
	tr td.indent,
	.data:last-child td.indent {
		border-right-color: #d2d2d2;
	}
	.data:last-child td.indent {
		border-bottom: 1px solid #d2d2d2;
	}
	.current {
		display: block;
		width: 4px;
		margin-left: 5px;
		border: 4px solid transparent;
		border-left-color: #666;
		border-right: 0;
	}
	.totals {
		display: grid;
		height: 31px;
		padding: 3px 0;
		border-top: 1px solid #ababab;
	}
	.totals output {
		display: block;
		height: 24px;
		margin: 0 0 0 2px;
		padding: 5px;
		border: 1px solid #ababab;
		text-align: right;
	}
	.totals div:last-child output {
		margin-right: 2px;
	}

	footer {
		display: flex;
		align-items: center;
		gap: 10px;
		flex: none;
		height: 24px;
		padding: 1px 2px 0 7px;
		background: #0072c6;
		color: #fff;
	}
	footer svg {
		align-self: flex-end;
		margin: 0 0 2px auto;
	}
</style>
